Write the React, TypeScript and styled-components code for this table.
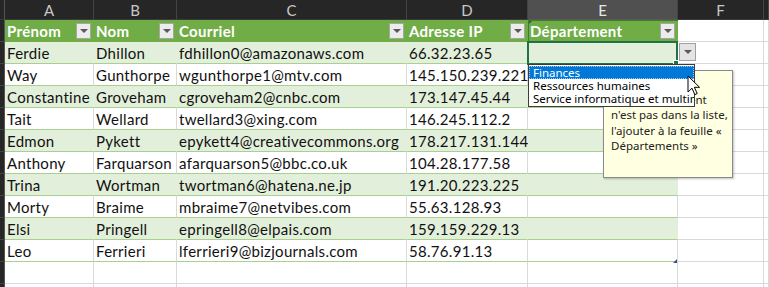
import React from "react";
import styled, { createGlobalStyle } from "styled-components";

const Global = createGlobalStyle`
  html, body { margin: 0; padding: 0; background: #ffffff; overflow: hidden; }
  #root { width: 769px; height: 287px; }
`;

const COLS = "5px 89px 83px 230px 121px 150px 86px 1fr";
const FONT = `"Lato", "Open Sans", "Liberation Sans", sans-serif`;
const UIFONT = `"Noto Sans", "Open Sans", "DejaVu Sans", sans-serif`;

const Sheet = styled.div`
  position: relative;
  width: 769px;
  height: 287px;
  overflow: hidden;
  font-family: ${FONT};
  font-size: 15px;
  color: #000;
`;

const Row = styled.div<{ $h: number }>`
  display: grid;
  grid-template-columns: ${COLS};
  height: ${(p) => p.$h}px;
`;

const Corner = styled.div`
  background: #262626;
  border-right: 1px solid #555;
  border-bottom: 1px solid #3a3a3a;
  box-sizing: border-box;
`;

const ColHead = styled.div<{ $active?: boolean }>`
  box-sizing: border-box;
  background: ${(p) => (p.$active ? "#505050" : "#262626")};
  color: ${(p) => (p.$active ? "#e8e8e8" : "#c8c8c8")};
  border-right: 1px solid #444;
  border-bottom: 1px solid ${(p) => (p.$active ? "#5a5a5a" : "#3a3a3a")};
  display: flex;
  align-items: center;
  justify-content: center;
  font-size: 15px;
  padding-top: 1px;
`;

const RowHead = styled.div`
  box-sizing: border-box;
  background: #262626;
  border-right: 1px solid #555;
  border-bottom: 1px solid #444;
`;

type Band = "head" | "green" | "white" | "out";

const Cell = styled.div<{ $band: Band }>`
  position: relative;
  box-sizing: border-box;
  display: flex;
  align-items: center;
  padding-left: 2px;
  white-space: nowrap;
  overflow: visible;
  letter-spacing: 0.3px;
  background: ${(p) =>
    p.$band === "head" ? "#70AD47" : p.$band === "green" ? "#E2EFDA" : "#ffffff"};
  border-right: 1px solid
    ${(p) =>
      p.$band === "head" ? "#70AD47" : p.$band === "green" ? "#E2EFDA" : "#D9D9D9"};
  border-bottom: 1px solid
    ${(p) =>
      p.$band === "head" ? "#70AD47" : p.$band === "out" ? "#D9D9D9" : "#A9D08E"};
  color: ${(p) => (p.$band === "head" ? "#ffffff" : "#111")};
  font-weight: ${(p) => (p.$band === "head" ? 700 : 400)};
  z-index: 0;
`;

const CellText = styled.span`
  position: relative;
  z-index: 1;
`;

const FilterBtn = styled.div`
  position: absolute;
  right: 2px;
  top: 3px;
  width: 15px;
  height: 16px;
  box-sizing: border-box;
  background: #ececec;
  border: 1px solid #a6a6a6;
  display: flex;
  align-items: center;
  justify-content: center;
`;

const Tri = styled.div`
  width: 0;
  height: 0;
  border-left: 4px solid transparent;
  border-right: 4px solid transparent;
  border-top: 4px solid #595959;
`;

const ErrMark = styled.div`
  position: absolute;
  left: 0;
  top: 0;
  width: 0;
  height: 0;
  border-top: 5px solid #1e6b3a;
  border-right: 5px solid transparent;
`;

const ActiveBox = styled.div`
  position: absolute;
  left: 527px;
  top: 41px;
  width: 151px;
  height: 24px;
  box-sizing: border-box;
  border: 2px solid #217346;
  z-index: 2;
`;

const FillHandle = styled.div`
  position: absolute;
  right: -3px;
  bottom: -3px;
  width: 4px;
  height: 4px;
  background: #217346;
  border: 1px solid #fff;
`;

const HeadOutline = styled.div`
  position: absolute;
  left: 528px;
  top: 20px;
  width: 150px;
  height: 22px;
  box-sizing: border-box;
  border-left: 1px solid #3f7f2a;
  border-top: 1px solid #3f7f2a;
  z-index: 2;
`;

const DropBtn = styled.div`
  position: absolute;
  left: 679px;
  top: 43px;
  width: 17px;
  height: 18px;
  box-sizing: border-box;
  background: #e4e4e4;
  border: 1px solid #a0a0a0;
  display: flex;
  align-items: center;
  justify-content: center;
  z-index: 3;
`;

const ResizeMark = styled.div`
  position: absolute;
  left: 673px;
  top: 259px;
  width: 0;
  height: 0;
  border-bottom: 4px solid #3b4fa0;
  border-left: 4px solid transparent;
  z-index: 2;
`;

const DropList = styled.div`
  position: absolute;
  left: 528px;
  top: 64px;
  width: 167px;
  height: 43px;
  box-sizing: border-box;
  background: #ffffff;
  border: 1px solid #3c3c3c;
  padding-top: 1px;
  font-family: ${UIFONT};
  font-size: 11.5px;
  overflow: hidden;
  z-index: 5;
`;

const DropItem = styled.div<{ $sel?: boolean }>`
  height: 13px;
  white-space: nowrap;
  color: ${(p) => (p.$sel ? "#ffffff" : "#000000")};
  background: ${(p) => (p.$sel ? "#0078D7" : "transparent")};
  box-sizing: border-box;
  border: ${(p) => (p.$sel ? "1px dotted #9cc8f0" : "0")};
  padding-left: ${(p) => (p.$sel ? "3px" : "4px")};
  line-height: ${(p) => (p.$sel ? "11px" : "13px")};
`;

const Tip = styled.div`
  position: absolute;
  left: 603px;
  top: 70px;
  width: 130px;
  height: 108px;
  box-sizing: border-box;
  background: #FFFFE1;
  border: 1px solid #8a8a8a;
  box-shadow: 1px 1px 2px rgba(0, 0, 0, 0.25);
  padding: 5px 0 0 7px;
  font-family: ${UIFONT};
  font-size: 11.5px;
  line-height: 15.5px;
  color: #222;
  z-index: 4;
`;

const TipLine = styled.div<{ $bold?: boolean }>`
  white-space: nowrap;
  font-weight: ${(p) => (p.$bold ? 700 : 400)};
`;

const Cursor = styled.svg`
  position: absolute;
  left: 687px;
  top: 75px;
  z-index: 6;
`;

const data = [
  ["Ferdie", "Dhillon", "fdhillon0@amazonaws.com", "66.32.23.65"],
  ["Way", "Gunthorpe", "wgunthorpe1@mtv.com", "145.150.239.221"],
  ["Constantine", "Groveham", "cgroveham2@cnbc.com", "173.147.45.44"],
  ["Tait", "Wellard", "twellard3@xing.com", "146.245.112.2"],
  ["Edmon", "Pykett", "epykett4@creativecommons.org", "178.217.131.144"],
  ["Anthony", "Farquarson", "afarquarson5@bbc.co.uk", "104.28.177.58"],
  ["Trina", "Wortman", "twortman6@hatena.ne.jp", "191.20.223.225"],
  ["Morty", "Braime", "mbraime7@netvibes.com", "55.63.128.93"],
  ["Elsi", "Pringell", "epringell8@elpais.com", "159.159.229.13"],
  ["Leo", "Ferrieri", "lferrieri9@bizjournals.com", "58.76.91.13"],
];

const headers = ["Prénom", "Nom", "Courriel", "Adresse IP", "Département"];
const letters = ["A", "B", "C", "D", "E", "F", ""];

export default function App() {
  return (
    <Sheet>
      <Global />
      <Row $h={20}>
        <Corner />
        {letters.map((l, i) => (
          <ColHead key={i} $active={l === "E"}>
            {l}
          </ColHead>
        ))}
      </Row>
      <Row $h={22}>
        <RowHead />
        {headers.map((h, i) => (
          <Cell key={h} $band="head">
            {i === 4 && <ErrMark />}
            <CellText>{h}</CellText>
            <FilterBtn>
              <Tri />
            </FilterBtn>
          </Cell>
        ))}
        <Cell $band="out" />
        <Cell $band="out" />
      </Row>
      {data.map((r, ri) => {
        const band: Band = ri % 2 === 0 ? "green" : "white";
        return (
          <Row $h={22} key={ri}>
            <RowHead />
            {r.map((v, ci) => (
              <Cell key={ci} $band={band}>
                <CellText>{v}</CellText>
              </Cell>
            ))}
            <Cell $band={band} />
            <Cell $band="out" />
            <Cell $band="out" />
          </Row>
        );
      })}
      {[0, 1].map((k) => (
        <Row $h={22} key={"e" + k}>
          <RowHead />
          {[0, 1, 2, 3, 4, 5, 6].map((c) => (
            <Cell key={c} $band="out" />
          ))}
        </Row>
      ))}

      <HeadOutline />
      <ActiveBox>
        <FillHandle />
      </ActiveBox>
      <DropBtn>
        <Tri />
      </DropBtn>
      <ResizeMark />

      <Tip>
        <TipLine $bold>Département</TipLine>
        <TipLine>Si le département</TipLine>
        <TipLine>n'est pas dans la liste,</TipLine>
        <TipLine>l'ajouter à la feuille «</TipLine>
        <TipLine>Départements »</TipLine>
      </Tip>

      <DropList>
        <DropItem $sel>Finances</DropItem>
        <DropItem>Ressources humaines</DropItem>
        <DropItem>Service informatique et multimédia</DropItem>
      </DropList>

      <Cursor width="14" height="22" viewBox="0 0 14 22">
        <path
          d="M1 1 L1 17 L5 13.2 L7.8 19.6 L10.2 18.6 L7.4 12.3 L12.6 12.3 Z"
          fill="#ffffff"
          stroke="#000000"
          strokeWidth="1"
          strokeLinejoin="round"
        />
      </Cursor>
    </Sheet>
  );
}
